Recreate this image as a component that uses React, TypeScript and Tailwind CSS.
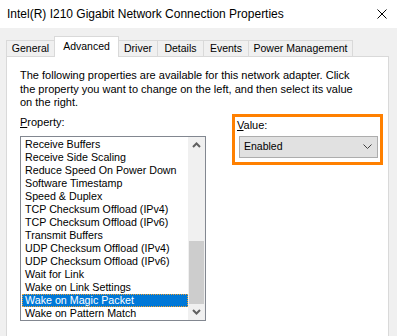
import React from 'react'

const tabs = [
  { label: 'General', w: 'w-[49px]' },
  { label: 'Advanced', w: 'w-[65px]', active: true },
  { label: 'Driver', w: 'w-[40px]' },
  { label: 'Details', w: 'w-[47px]' },
  { label: 'Events', w: 'w-[46px]' },
  { label: 'Power Management', w: 'w-[105px]' },
]

const props = [
  'Receive Buffers',
  'Receive Side Scaling',
  'Reduce Speed On Power Down',
  'Software Timestamp',
  'Speed & Duplex',
  'TCP Checksum Offload (IPv4)',
  'TCP Checksum Offload (IPv6)',
  'Transmit Buffers',
  'UDP Checksum Offload (IPv4)',
  'UDP Checksum Offload (IPv6)',
  'Wait for Link',
  'Wake on Link Settings',
  'Wake on Magic Packet',
  'Wake on Pattern Match',
]

const selected = 'Wake on Magic Packet'

function Chevron({ up, className }: { up?: boolean; className?: string }) {
  return (
    <svg width="9" height="6" viewBox="0 0 9 6" className={className}>
      <path
        d={up ? 'M1 5 L4.5 1.5 L8 5' : 'M1 1 L4.5 4.5 L8 1'}
        fill="none"
        stroke="#606060"
        strokeWidth="2"
      />
    </svg>
  )
}

export default function App() {
  return (
    <div className="w-[397px] h-[336px] overflow-hidden bg-[#f0f0f0] text-black font-['Liberation_Sans',Arial,sans-serif]">
      {/* title bar */}
      <div className="h-[28px] bg-white flex items-center justify-between pl-[7px] pr-[10px]">
        <div className="text-[12px] leading-none">Intel(R) I210 Gigabit Network Connection Properties</div>
        <svg width="10" height="10" viewBox="0 0 10 10">
          <path d="M0.5 0.5 L9.5 9.5 M9.5 0.5 L0.5 9.5" stroke="#000" strokeWidth="1" />
        </svg>
      </div>

      {/* tabs */}
      <div className="mt-[8px] h-[20px] flex items-end pl-[6px]">
        {tabs.map((t, i) => (
          <div
            key={t.label}
            className={
              'border border-b-0 border-[#d9d9d9] flex items-center justify-center text-[10.5px] leading-none ' +
              t.w +
              (i > 0 ? ' -ml-px' : '') +
              (t.active ? ' h-[21px] -mb-px bg-white relative z-10 pb-[2px]' : ' h-[16px] bg-[#f0f0f0]')
            }
          >
            {t.label}
          </div>
        ))}
      </div>

      {/* panel */}
      <div className="ml-[6px] w-[383px] h-[300px] bg-white border border-[#d9d9d9] pl-[13px] pt-[12px]">
        <p className="text-[11px] leading-[13.5px] whitespace-nowrap">
          The following properties are available for this network adapter. Click
          <br />
          the property you want to change on the left, and then select its value
          <br />
          on the right.
        </p>

        <div className="mt-[4px] flex">
          <div className="pt-[2px]">
            <div className="text-[11px] leading-[13px]">
              <u>P</u>roperty:
            </div>
            <div className="mt-[7px] w-[186px] h-[185px] border border-[#828790] flex overflow-hidden">
              <div className="flex-1 pt-[1px] pl-[1px]">
                {props.map(p => (
                  <div
                    key={p}
                    className={
                      'h-[13px] pl-[3px] text-[10.7px] leading-[13px] whitespace-nowrap ' +
                      (p === selected
                        ? 'bg-[#0078d7] text-white outline outline-1 outline-dotted outline-[#f0a030] -outline-offset-1'
                        : '')
                    }
                  >
                    {p}
                  </div>
                ))}
              </div>
              <div className="w-[17px] bg-[#f0f0f0] flex flex-col">
                <div className="h-[17px] flex items-center justify-center">
                  <Chevron up />
                </div>
                <div className="flex-1 flex flex-col justify-end px-[1px]">
                  <div className="h-[63px] bg-[#cdcdcd]" />
                </div>
                <div className="h-[16px] flex items-center justify-center">
                  <Chevron />
                </div>
              </div>
            </div>
          </div>

          <div className="ml-[26px] w-[151px] h-[51px] border-[3px] border-[#ff8000] pl-[2px] pr-[2px] pt-[1px]">
            <div className="text-[11px] leading-[13px] pt-[1px]">
              <u>V</u>alue:
            </div>
            <div className="mt-[4px] ml-[2px] h-[22px] bg-[#e1e1e1] border border-[#adadad] flex items-center justify-between pl-[4px] pr-[5px]">
              <span className="text-[10.5px] leading-none">Enabled</span>
              <svg width="9" height="5" viewBox="0 0 9 5">
                <path d="M0.5 0.5 L4.5 4.5 L8.5 0.5" fill="none" stroke="#404040" strokeWidth="1" />
              </svg>
            </div>
          </div>
        </div>
      </div>
    </div>
  )
}
